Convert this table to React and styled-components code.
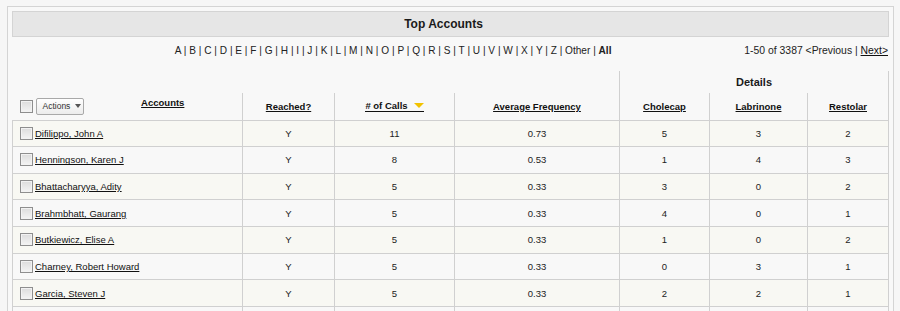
import React from "react"
import styled, { createGlobalStyle } from "styled-components"

const GlobalStyle = createGlobalStyle`
	html, body {
		margin: 0;
		overflow: hidden;
		background: #f6f6f6;
	}
	body {
		font-family: "Liberation Sans", Arial, sans-serif;
		color: #222;
	}
`

const Panel = styled.div`
	margin: 6px 6px 0 7px;
	border: 1px solid #d4d4d4;
	background: #f8f8f8;
	padding: 4px;
`

const TitleBar = styled.div`
	height: 24px;
	border: 1px solid #d4d4d4;
	background: #e6e6e6;
	display: flex;
	align-items: center;
	justify-content: center;
	padding-right: 14px;
	font-size: 12px;
	font-weight: bold;
	color: #1a1a1a;
`

const Toolbar = styled.div`
	height: 34px;
	box-sizing: border-box;
	padding-top: 8px;
	display: grid;
	grid-template-columns: 1fr auto;
	align-items: start;
	line-height: 12px;
`

const Alphabet = styled.div`
	text-align: center;
	padding-left: 30px;
	font-size: 10.1px;
	color: #222;
`

const Letter = styled.a`
	color: #222;
	text-decoration: none;
	font-weight: ${(p) => (p.$active ? "bold" : "normal")};
`

const Pager = styled.div`
	font-size: 10.4px;
	padding-right: 1px;
	color: #222;

	a {
		color: #111;
		text-decoration: underline;
	}
`

const Table = styled.table`
	width: 876px;
	border-collapse: collapse;
	table-layout: fixed;
	font-size: 9.5px;
`

const GroupRow = styled.tr`
	height: 22px;

	th {
		padding: 0;
		font-size: 11px;
		font-weight: bold;
		color: #1a1a1a;
	}
`

const DetailsCell = styled.th`
	border-left: 1px solid #d0d0d0;
	border-right: 1px solid #d0d0d0;
`

const HeadRow = styled.tr`
	height: 27px;
`

const HeadCell = styled.th`
	padding: 0;
	font-weight: bold;
	text-align: center;
	vertical-align: middle;
	border-bottom: 1px solid #d0d0d0;
	border-left: ${(p) => (p.$first ? "none" : "1px solid #d0d0d0")};
	border-right: ${(p) => (p.$last ? "1px solid #d0d0d0" : "none")};

	a {
		color: #111;
		text-decoration: underline;
	}
`

const AccountsHead = styled.div`
	display: flex;
	align-items: center;
	padding-left: 7px;
`

const Check = styled.input.attrs({ type: "checkbox" })`
	appearance: none;
	margin: 0;
	width: 13px;
	height: 13px;
	flex: none;
	box-sizing: border-box;
	border: 1px solid #8e8e8e;
	background: linear-gradient(#dcdcdc, #f4f4f4);
	box-shadow: inset 0 0 0 1px #f2f2f2;
`

const ActionsButton = styled.button`
	margin-left: 3px;
	width: 48px;
	height: 17px;
	padding: 0 0 0 6px;
	display: flex;
	align-items: center;
	gap: 5px;
	box-sizing: border-box;
	border: 1px solid #a9a9a9;
	border-radius: 2px;
	background: linear-gradient(#ffffff, #ececec);
	font-family: "Liberation Sans", Arial, sans-serif;
	font-size: 8.5px;
	color: #333;
`

const Caret = styled.span`
	width: 0;
	height: 0;
	border-left: 3.5px solid transparent;
	border-right: 3.5px solid transparent;
	border-top: 4px solid #555;
`

const AccountsLabel = styled.span`
	flex: 1;
	text-align: center;
	padding-bottom: 8px;
`

const SortLink = styled.a`
	display: inline-flex;
	align-items: center;
	gap: 6px;
	color: #111;
	line-height: 11px;
	text-decoration: none !important;
	border-bottom: 1px solid #111;
`

const DataRow = styled.tr`
	height: 26.67px;
	background: ${(p) => (p.$odd ? "#f8f8f3" : "#f8f8f8")};
`

const Cell = styled.td`
	padding: 0;
	border: 1px solid #d0d0d0;
	text-align: center;
	vertical-align: middle;
	color: #222;
`

const NameCell = styled.div`
	display: flex;
	align-items: center;
	gap: 2px;
	padding-left: 7px;

	a {
		color: #111;
		text-decoration: underline;
		white-space: nowrap;
	}
`

const letters = "ABCDEFGHIJKLMNOPQRSTUVWXYZ".split("").concat(["Other", "All"])

const rows = [
	["Difilippo, John A", "Y", 11, "0.73", 5, 3, 2],
	["Henningson, Karen J", "Y", 8, "0.53", 1, 4, 3],
	["Bhattacharyya, Adity", "Y", 5, "0.33", 3, 0, 2],
	["Brahmbhatt, Gaurang", "Y", 5, "0.33", 4, 0, 1],
	["Butkiewicz, Elise A", "Y", 5, "0.33", 1, 0, 2],
	["Charney, Robert Howard", "Y", 5, "0.33", 0, 3, 1],
	["Garcia, Steven J", "Y", 5, "0.33", 2, 2, 1],
]

const widths = [230, 92, 120, 165, 90, 98, 81]

export default () => {
	return (
		<>
			<GlobalStyle />
			<Panel>
				<TitleBar>Top Accounts</TitleBar>
				<Toolbar>
					<Alphabet>
						{letters.map((l, i) => (
							<React.Fragment key={l}>
								{i > 0 && " | "}
								<Letter $active={l === "All"}>{l}</Letter>
							</React.Fragment>
						))}
					</Alphabet>
					<Pager>
						1-50 of 3387 &lt;Previous | <a>Next&gt;</a>
					</Pager>
				</Toolbar>
				<Table>
					<colgroup>
						{widths.map((w, i) => (
							<col key={i} style={{ width: w }} />
						))}
					</colgroup>
					<thead>
						<GroupRow>
							<th colSpan={4}></th>
							<DetailsCell colSpan={3}>Details</DetailsCell>
						</GroupRow>
						<HeadRow>
							<HeadCell $first>
								<AccountsHead>
									<Check />
									<ActionsButton>
										Actions <Caret />
									</ActionsButton>
									<AccountsLabel>
										<a>Accounts</a>
									</AccountsLabel>
								</AccountsHead>
							</HeadCell>
							<HeadCell>
								<a>Reached?</a>
							</HeadCell>
							<HeadCell>
								<SortLink>
									# of Calls
									<svg width="10" height="5" viewBox="0 0 10 5">
										<polygon points="0,0 10,0 5,5" fill="#f2c200" />
									</svg>
								</SortLink>
							</HeadCell>
							<HeadCell>
								<a>Average Frequency</a>
							</HeadCell>
							<HeadCell>
								<a>Cholecap</a>
							</HeadCell>
							<HeadCell>
								<a>Labrinone</a>
							</HeadCell>
							<HeadCell $last>
								<a>Restolar</a>
							</HeadCell>
						</HeadRow>
					</thead>
					<tbody>
						{rows.map((r, i) => (
							<DataRow key={r[0]} $odd={i % 2 === 0}>
								<Cell>
									<NameCell>
										<Check />
										<a>{r[0]}</a>
									</NameCell>
								</Cell>
								{r.slice(1).map((v, j) => (
									<Cell key={j}>{v}</Cell>
								))}
							</DataRow>
						))}
						<DataRow>
							{widths.map((w, i) => (
								<Cell key={i}></Cell>
							))}
						</DataRow>
					</tbody>
				</Table>
			</Panel>
		</>
	)
}
